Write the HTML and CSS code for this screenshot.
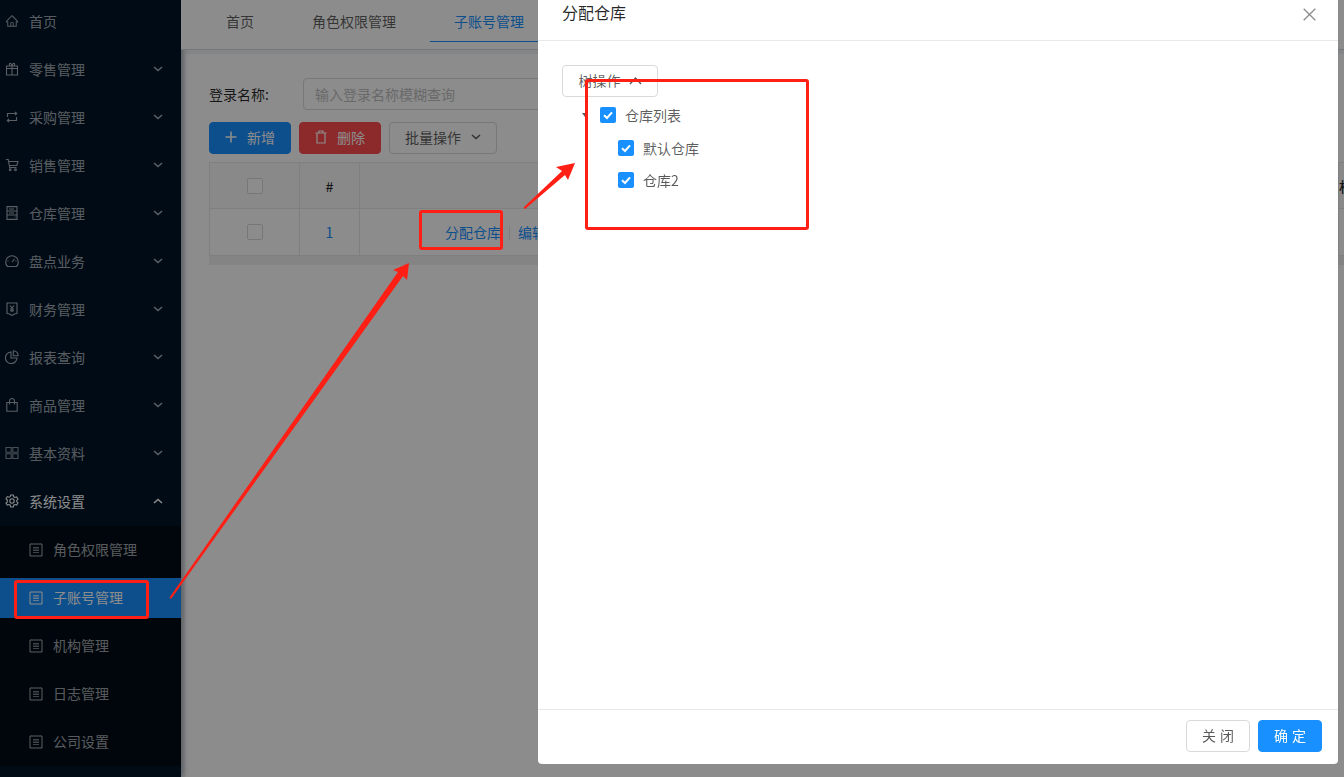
FILE: index.html
```html
<!DOCTYPE html>
<html lang="zh-CN">
<head>
<meta charset="utf-8">
<title>子账号管理</title>
<link rel="stylesheet" href="styles.css">
</head>
<body>
<svg class="defs" width="0" height="0" aria-hidden="true">
  <defs>
    <symbol id="i-doc" viewBox="0 0 14 14"><path d="M1 1h12v12H1z" fill="none" stroke="currentColor" stroke-width="1"/><path d="M4 4.500h6M4 6h6M4 7.500h6M4 9.500h6" stroke="currentColor" stroke-width=".9" opacity=".8"/></symbol>
    <symbol id="i-down" viewBox="0 0 10 6"><path d="M1 1l4 3.600L9 1" fill="none" stroke="currentColor" stroke-width="1.500"/></symbol>
    <symbol id="i-check" viewBox="0 0 16 16"><path d="M4 8.200l3 2.800 5-5.600" fill="none" stroke="#fff" stroke-width="2"/></symbol>
  </defs>
</svg>
<div class="app">
  <aside class="sidebar">
    <ul class="menu">
      <li class="item"><svg class="ico" viewBox="0 0 1024 1024"><path fill="currentColor" d="M946.5 505L560.1 118.8l-25.9-25.9a31.5 31.5 0 0 0-44.4 0L77.5 505a63.9 63.9 0 0 0-18.8 46c.4 35.2 29.7 63.3 64.9 63.3h42.5V940h691.8V614.3h43.4c17.1 0 33.2-6.7 45.3-18.8a63.6 63.6 0 0 0 18.7-45.3c0-17-6.7-33.1-18.8-45.2zM568 868H456V664h112v204zm217.9-325.7V868H632V640c0-22.1-17.9-40-40-40H432c-22.1 0-40 17.9-40 40v228H238.1V542.3h-96l370-369.7 23.1 23.1L882 542.3h-96.1z"/></svg><span>首页</span></li>
      <li class="item"><svg class="ico" viewBox="0 0 14 14" fill="none" stroke="currentColor" stroke-width="1.100"><path d="M1.500 4h11v2.500h-11zM1.500 6.500V13h11V6.500M7 4v9M7 4C5 4 3.800 3 4.500 1.700 5.300.7 6.600 2 7 4c.4-2 1.700-3.300 2.500-2.300C10.200 3 9 4 7 4z"/></svg><span>零售管理</span><svg class="chev"><use href="#i-down"/></svg></li>
      <li class="item"><svg class="ico" viewBox="0 0 14 14" fill="none" stroke="currentColor" stroke-width="1.100"><path d="M2.500 7V3.500h9M10 2l1.700 1.500L10 5M11.500 7v3.500h-9M4 9l-1.700 1.500L4 12"/></svg><span>采购管理</span><svg class="chev"><use href="#i-down"/></svg></li>
      <li class="item"><svg class="ico" viewBox="0 0 14 14" fill="none" stroke="currentColor" stroke-width="1.100"><path d="M1 1.500h2.200l1.500 8h6.800M3.500 3.500h9.500l-1.200 4H4.300"/><circle cx="5.200" cy="11.800" r=".9"/><circle cx="10.500" cy="11.800" r=".9"/></svg><span>销售管理</span><svg class="chev"><use href="#i-down"/></svg></li>
      <li class="item"><svg class="ico" viewBox="0 0 14 14" fill="none" stroke="currentColor" stroke-width="1.100"><path d="M2 .6h10v12.800H2zM2 5h10M2 9h10M4 3h5M4 7h5M9.500 11h1"/></svg><span>仓库管理</span><svg class="chev"><use href="#i-down"/></svg></li>
      <li class="item"><svg class="ico" viewBox="0 0 14 14" fill="none" stroke="currentColor" stroke-width="1.100"><path d="M2.500 12.500a6.300 6.300 0 1 1 9 0zM7 8l2.500-3M2.500 7h1M10.500 7h1"/></svg><span>盘点业务</span><svg class="chev"><use href="#i-down"/></svg></li>
      <li class="item"><svg class="ico" viewBox="0 0 14 14" fill="none" stroke="currentColor" stroke-width="1.100"><path d="M2 1h10v10.500l-2 .2L7 13.500 4 11.700l-2-.2zM5 3.500L7 6l2-2.500M7 6v4M5 7h4M5 8.700h4"/></svg><span>财务管理</span><svg class="chev"><use href="#i-down"/></svg></li>
      <li class="item"><svg class="ico" viewBox="0 0 14 14" fill="none" stroke="currentColor" stroke-width="1.100"><path d="M6 2a5.800 5.800 0 1 0 6 6H6zM8.300.8v4.900h4.900A4.900 4.900 0 0 0 8.300.8z"/></svg><span>报表查询</span><svg class="chev"><use href="#i-down"/></svg></li>
      <li class="item"><svg class="ico" viewBox="0 0 14 14" fill="none" stroke="currentColor" stroke-width="1.100"><path d="M1.800 4.500h10.400v8.700H1.800zM4.500 6.500V3a2.500 2.500 0 0 1 5 0v3.500"/></svg><span>商品管理</span><svg class="chev"><use href="#i-down"/></svg></li>
      <li class="item"><svg class="ico" viewBox="0 0 14 14" fill="none" stroke="currentColor" stroke-width="1.100" opacity=".8"><path d="M1 1.500h5.200v4.700H1zM7.800 1.500H13v4.700H7.800zM1 7.800h5.200v4.700H1zM7.800 7.800H13v4.700H7.800z"/></svg><span>基本资料</span><svg class="chev"><use href="#i-down"/></svg></li>
      <li class="item open"><svg class="ico" viewBox="0 0 14 14" fill="none" stroke="currentColor" stroke-width="1.100"><path d="M5.700 1h2.600l.4 1.800 1.300.7 1.700-.6 1.300 2.300-1.300 1.200v1.200l1.300 1.200-1.300 2.300-1.700-.6-1.300.7-.4 1.800H5.700l-.4-1.800-1.300-.7-1.700.6L1 9.100l1.300-1.200V6.100L1 4.900l1.300-2.300 1.700.6 1.300-.7z"/><circle cx="7" cy="7" r="2.200"/></svg><span>系统设置</span><svg class="chev up"><use href="#i-down"/></svg></li>
      <li>
        <ul class="submenu">
          <li class="subitem"><svg class="ico"><use href="#i-doc"/></svg><span>角色权限管理</span></li>
          <li class="subitem active"><svg class="ico"><use href="#i-doc"/></svg><span>子账号管理</span></li>
          <li class="subitem"><svg class="ico"><use href="#i-doc"/></svg><span>机构管理</span></li>
          <li class="subitem"><svg class="ico"><use href="#i-doc"/></svg><span>日志管理</span></li>
          <li class="subitem"><svg class="ico"><use href="#i-doc"/></svg><span>公司设置</span></li>
        </ul>
      </li>
    </ul>
  </aside>
  <main class="main">
    <nav class="tabs">
      <a class="tab">首页</a>
      <a class="tab">角色权限管理</a>
      <a class="tab current">子账号管理</a>
    </nav>
    <section class="card">
      <div class="search">
        <label class="search-label">登录名称:</label>
        <div class="input">输入登录名称模糊查询</div>
      </div>
      <div class="toolbar">
        <button class="btn primary"><svg class="btn-ico" viewBox="0 0 12 12"><path d="M6 .5v11M.5 6h11" stroke="currentColor" stroke-width="1.600"/></svg>新增</button>
        <button class="btn danger"><svg class="btn-ico" viewBox="0 0 12 14" fill="none" stroke="currentColor" stroke-width="1.200"><path d="M.5 3h11M4 3V1h4v2M2 3v10h8V3"/></svg>删除</button>
        <button class="btn plain">批量操作<svg class="btn-chev"><use href="#i-down"/></svg></button>
      </div>
      <div class="table-wrap">
        <table class="table">
          <colgroup>
            <col class="c-check"><col class="c-num"><col class="c-act"><col class="c-rest">
          </colgroup>
          <thead>
            <tr><th><span class="box"></span></th><th>#</th><th></th><th class="left">机构</th></tr>
          </thead>
          <tbody>
            <tr><td><span class="box"></span></td><td class="num">1</td><td class="actions"><a>分配仓库</a><i class="sep"></i><a>编辑</a></td><td></td></tr>
          </tbody>
        </table>
      </div>
    </section>
  </main>
</div>
<div class="mask"></div>
<div class="modal">
  <header class="modal-head">
    <h2 class="modal-title">分配仓库</h2>
    <svg class="modal-close" viewBox="0 0 13 13"><path d="M.7.7l11.600 11.600M12.300.7L.7 12.300" stroke="currentColor" stroke-width="1.300"/></svg>
  </header>
  <div class="modal-body">
    <button class="btn plain tree-btn">树操作<svg class="chev-up" viewBox="0 0 13 9"><path d="M1 8l5.500-6L12 8" fill="none" stroke="currentColor" stroke-width="1.400"/></svg></button>
    <div class="tree">
      <div class="node root"><i class="caret"></i><span class="check"><svg viewBox="0 0 16 16"><use href="#i-check"/></svg></span><span>仓库列表</span></div>
      <div class="node child"><span class="check"><svg viewBox="0 0 16 16"><use href="#i-check"/></svg></span><span>默认仓库</span></div>
      <div class="node child"><span class="check"><svg viewBox="0 0 16 16"><use href="#i-check"/></svg></span><span>仓库2</span></div>
    </div>
  </div>
  <footer class="modal-foot">
    <button class="btn plain foot-btn">关 闭</button>
    <button class="btn primary foot-btn">确 定</button>
  </footer>
</div>
<div class="mark mark-menu"></div>
<div class="mark mark-link"></div>
<div class="mark mark-tree"></div>
<svg class="arrows" viewBox="0 0 1344 777" aria-hidden="true">
  <polygon points="169.500,597.500 398,272 393,270 409,263 407,280 403,276 171,599"/>
  <polygon points="523.500,207.500 562,171 556,167 575,163 568,180 565,175 525,209"/>
</svg>
</body>
</html>
```
FILE: styles.css
```css
* { box-sizing: border-box; }
html, body { margin: 0; height: 100%; overflow: hidden; }
body {
  font-family: "Noto Sans CJK SC", "Liberation Sans", sans-serif;
  font-size: 14px;
  color: rgba(0, 0, 0, .65);
  background: #f0f2f5;
}
ul { list-style: none; margin: 0; padding: 0; }
.defs { position: absolute; }
.app { display: flex; height: 100vh; }

.sidebar {
  flex: 0 0 181px;
  background: #001529;
  color: rgba(255, 255, 255, .65);
  box-shadow: 2px 0 6px rgba(0, 21, 41, .35);
  overflow: hidden;
  position: relative;
}
.menu { margin-top: -3px; }
.item {
  display: flex;
  align-items: center;
  height: 48px;
  padding: 0 18px 0 5px;
}
.item > span { flex: 1; margin-left: 10px; }
.item.open { color: #fff; }
.ico { width: 14px; height: 14px; flex: none; }
.chev { width: 10px; height: 6px; flex: none; }
.chev.up { transform: rotate(180deg); }
.submenu { background: #000c17; margin-top: 1px; padding: 4px 0; }
.subitem {
  display: flex;
  align-items: center;
  height: 40px;
  margin-bottom: 8px;
  padding-left: 29px;
}
.subitem:last-child { margin-bottom: 0; }
.subitem > span { margin-left: 10px; position: relative; top: -1px; }
.subitem.active { background: #1890ff; color: #fff; }

.main { flex: 1; min-width: 0; display: flex; flex-direction: column; overflow: hidden; }
.tabs {
  display: flex;
  flex: none;
  position: relative;
  height: 50px;
  padding-left: 21px;
  background: #fff;
  border-bottom: 1px solid #d9d9d9;
}
.tab {
  height: 42px;
  line-height: 42px;
  padding: 0 24px;
  margin-right: 10px;
  color: rgba(0, 0, 0, .65);
}
.tab.current { color: #1890ff; border-bottom: 1px solid #1890ff; }

.card {
  flex: 1;
  margin: 4px 0 0 4px;
  padding: 24px 0 0 24px;
  background: #fff;
  overflow: hidden;
}
.search { display: flex; align-items: center; height: 32px; }
.search-label { width: 94px; flex: none; color: rgba(0, 0, 0, .85); }
.input {
  width: 400px;
  flex: none;
  height: 32px;
  line-height: 30px;
  padding-left: 11px;
  border: 1px solid #d9d9d9;
  border-radius: 4px;
  color: #bfbfbf;
}
.toolbar { display: flex; gap: 8px; margin-top: 12px; }
.btn {
  display: inline-flex;
  align-items: center;
  justify-content: center;
  height: 32px;
  padding: 0 0 2px;
  border: 1px solid #d9d9d9;
  border-radius: 4px;
  background: #fff;
  color: rgba(0, 0, 0, .65);
  font: inherit;
  word-spacing: 1px;
  white-space: nowrap;
}
.btn.primary { background: #1890ff; border-color: #1890ff; color: #fff; }
.btn.danger { background: #ff4d4f; border-color: #ff4d4f; color: #fff; }
.toolbar .btn.primary, .toolbar .btn.danger { width: 82px; }
.toolbar .btn.plain { width: 108px; }
.btn-ico { width: 12px; height: 14px; margin-right: 10px; }
.btn-chev { width: 10px; height: 6px; margin-left: 10px; }
.chev-up { width: 13px; height: 9px; margin-left: 8px; }

.table-wrap {
  width: 1135px;
  margin-top: 8px;
  padding-bottom: 9px;
  background: #f0f0f0;
  overflow: hidden;
}
.table {
  width: 1300px;
  table-layout: fixed;
  border-collapse: collapse;
  background: #fff;
}
.c-check { width: 90px; }
.c-num { width: 60px; }
.c-act { width: 979px; }
.table th, .table td {
  border: 1px solid #e8e8e8;
  text-align: center;
  padding: 0;
  font-weight: 400;
}
.table th { height: 46px; background: #fafafa; color: rgba(0, 0, 0, .85); font-weight: 500; }
.table td { height: 47px; }
.table th.left { text-align: left; }
.box {
  display: block;
  width: 16px;
  height: 16px;
  margin: 0 auto;
  border: 1px solid #d9d9d9;
  border-radius: 2px;
  background: #fff;
}
.table .num { color: #1890ff; }
.table .actions { text-align: left; padding-left: 85px; color: #1890ff; }
.sep {
  display: inline-block;
  width: 1px;
  height: 14px;
  margin: 0 8px;
  background: #e8e8e8;
  vertical-align: -2px;
}

.mask { position: fixed; inset: 0; background: rgba(0, 0, 0, .45); }

.modal {
  position: fixed;
  left: 538px;
  top: -15px;
  width: 800px;
  height: 779px;
  display: flex;
  flex-direction: column;
  background: #fff;
  border-radius: 4px;
}
.modal-head {
  flex: none;
  display: flex;
  align-items: center;
  justify-content: space-between;
  height: 56px;
  padding: 0 22px 2px 24px;
  border-bottom: 1px solid #e8e8e8;
}
.modal-title { margin: 0; font-size: 16px; font-weight: 400; color: rgba(0, 0, 0, .85); }
.modal-close { width: 13px; height: 13px; margin-top: 5px; color: #8c8c8c; }
.modal-body { flex: 1; padding: 24px; }
.tree-btn { width: 96px; }
.tree { margin-top: 2px; }
.node { display: flex; align-items: center; height: 32.5px; }
.node.root { padding-left: 20px; }
.node.child { padding-left: 56px; }
.caret {
  width: 0;
  height: 0;
  margin-right: 12px;
  border: 3px solid transparent;
  border-top: 4px solid rgba(0, 0, 0, .65);
  border-bottom: 0;
}
.check {
  width: 16px;
  height: 16px;
  margin-right: 9px;
  border-radius: 2px;
  background: #1890ff;
  flex: none;
}
.check svg { display: block; width: 16px; height: 16px; }
.modal-foot {
  flex: none;
  display: flex;
  justify-content: flex-end;
  gap: 8px;
  height: 55px;
  padding: 10px 16px;
  border-top: 1px solid #e8e8e8;
}
.foot-btn { width: 64px; }

.mark { position: fixed; border: 3px solid #ff1f14; border-radius: 3px; }
.mark-menu { left: 14px; top: 580px; width: 135px; height: 39px; }
.mark-link { left: 419px; top: 210px; width: 84px; height: 40px; }
.mark-tree { left: 585px; top: 79px; width: 224px; height: 151px; }
.arrows { position: fixed; inset: 0; width: 1344px; height: 777px; pointer-events: none; }
.arrows polygon { fill: #ff1f14; }
```
